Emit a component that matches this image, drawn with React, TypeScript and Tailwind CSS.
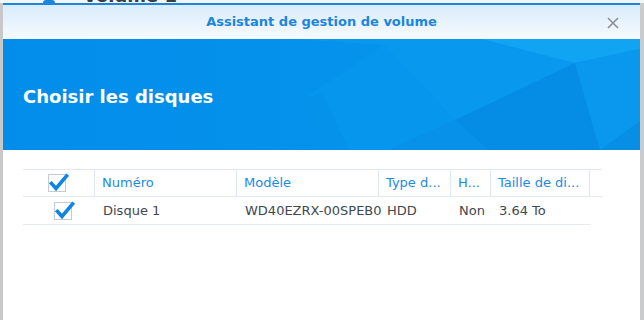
import React from "react";

const font = { fontFamily: '"DejaVu Sans", Verdana, sans-serif' };

function CheckBox({ className = "" }: { className?: string }) {
  return (
    <div className={`relative w-[18px] h-[18px] border border-[#c3cbd3] bg-white ${className}`}>
      <svg className="absolute -left-px -top-px overflow-visible" width="18" height="18" viewBox="0 0 18 18">
        <path d="M3.5 9.5 L8 14.5 L18.5 2" fill="none" stroke="#0f84e2" strokeWidth="3.6" strokeLinecap="square" strokeLinejoin="miter" />
      </svg>
    </div>
  );
}

function Banner() {
  return (
    <div className="relative h-[111px] bg-[#038fea] overflow-hidden">
      <svg className="absolute inset-0" width="637" height="111" viewBox="0 0 637 111" preserveAspectRatio="none">
        <defs>
          <linearGradient id="fade" x1="0" x2="1" y1="0" y2="0">
            <stop offset="0" stopColor="#028dea" />
            <stop offset="1" stopColor="#0797ee" />
          </linearGradient>
        </defs>
        <rect x="0" y="0" width="637" height="111" fill="url(#fade)" />
        <polygon points="290,0 479,0 572,24 452,81 381,6" fill="#0899ef" />
        <polygon points="479,0 637,0 637,10 572,24" fill="#10a4f2" />
        <polygon points="381,6 452,81 386,111 319,111 300,60" fill="#0696ed" />
        <polygon points="572,24 452,81 485,111 597,111" fill="#058de6" />
        <polygon points="452,81 386,111 485,111" fill="#0891e8" />
        <polygon points="572,24 637,10 637,82 597,111" fill="#0998ee" />
        <polygon points="637,82 597,111 637,111" fill="#078fe6" />
        <polygon points="319,54 300,60 319,111 346,111" fill="#0492ea" />
      </svg>
      <div className="relative h-full flex items-center pl-[20px] pt-[4px]">
        <span className="text-white font-bold text-[18px]" style={font}>
          Choisir les disques
        </span>
      </div>
    </div>
  );
}

const cols = [
  { label: "Numéro", w: "w-[142px]", value: "Disque 1" },
  { label: "Modèle", w: "w-[142px]", value: "WD40EZRX-00SPEB0" },
  { label: "Type d...", w: "w-[72px]", value: "HDD" },
  { label: "H...", w: "w-[40px]", value: "Non" },
  { label: "Taille de di...", w: "w-[99px]", value: "3.64 To" },
];

function DiskTable() {
  return (
    <div className="ml-[20px] w-[579px] text-[13px]" style={font}>
      <div className="flex h-[28px] border-t border-b border-[#e1e8ef]">
        <div className="w-[72px] flex items-center pl-[25px] border-r border-[#dfe7ef]">
          <CheckBox />
        </div>
        {cols.map((c) => (
          <div key={c.label} className={`${c.w} flex items-center pl-[7px] border-r border-[#dfe7ef] text-[#1a8ae4] whitespace-nowrap overflow-hidden`}>
            {c.label}
          </div>
        ))}
      </div>
      <div className="flex h-[28px] w-[567px] border-b border-[#e4eaf0]">
        <div className="w-[72px] flex items-center pl-[31px]">
          <CheckBox />
        </div>
        {cols.map((c) => (
          <div key={c.label} className={`${c.w} flex items-center pl-[8px] text-[#404850] whitespace-nowrap`}>
            {c.value}
          </div>
        ))}
      </div>
    </div>
  );
}

export default function App() {
  return (
    <div className="w-[644px] h-[320px] overflow-hidden bg-white flex flex-col">
      <div className="h-[3px] overflow-hidden bg-[#f2f4f6] flex shrink-0">
        <div className="ml-[43px] w-[12px] h-[6px] rounded-full bg-[#1d86dc]" />
        <div className="ml-[28px] -mt-[13px] text-[18px] leading-[18px] font-bold text-[#3a3f45]" style={font}>
          Volume 1
        </div>
      </div>
      <div className="flex flex-1">
        <div className="w-[3px] bg-[#c6c8ca]" />
        <div className="flex-1 flex flex-col border-t-2 border-[#1a86df]">
          <div className="relative h-[34px] bg-gradient-to-b from-[#d9ecfb] to-[#f6faff] flex items-center justify-center">
            <span className="font-bold text-[13px] text-[#1c85dc]" style={font}>
              Assistant de gestion de volume
            </span>
            <svg className="absolute right-[21px] top-[12px]" width="12" height="12" viewBox="0 0 12 12">
              <path d="M1 1 L11 11 M11 1 L1 11" stroke="#8c9096" strokeWidth="1.6" />
            </svg>
          </div>
          <Banner />
          <div className="flex-1 bg-white pt-[19px]">
            <DiskTable />
          </div>
        </div>
        <div className="w-[4px] bg-[#c9cbcd]" />
      </div>
    </div>
  );
}
